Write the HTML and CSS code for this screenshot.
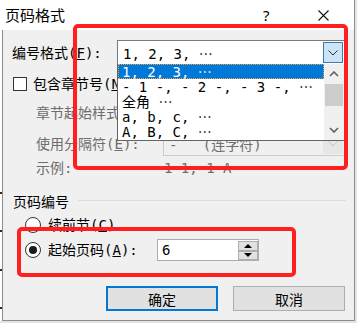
FILE: index.html
```html
<!DOCTYPE html>
<html lang="zh-CN">
<head>
    <meta charset="UTF-8">
    <meta name="viewport" content="width=device-width, initial-scale=1.0">
    <title>页码格式</title>
    <link rel="stylesheet" href="styles.css">
</head>
<body>
<div class="screen">
    <div class="dialog">
        <div class="titlebar">
            <span class="title">页码格式</span>
            <span class="help">?</span>
            <svg class="close" width="11" height="11" viewBox="0 0 11 11">
                <path d="M0.5 0.5 L10.5 10.5 M10.5 0.5 L0.5 10.5" stroke="#111" stroke-width="1.1" fill="none"/>
            </svg>
        </div>

        <div class="panel">
            <div class="row row-format">
                <span class="label label-format">编号格式(<u>F</u>):</span>
                <div class="combo">
                    <span class="combo-value">1, 2, 3, <span class="dots">…</span></span>
                    <span class="combo-btn combo-btn-hot">
                        <svg width="10" height="6" viewBox="0 0 10 6"><path d="M0.5 0.5 L5 5 L9.5 0.5" stroke="#333" fill="none"/></svg>
                    </span>
                </div>
            </div>

            <div class="row row-check">
                <span class="checkbox"></span>
                <span class="label">包含章节号(<u>N</u>)</span>
            </div>

            <div class="row row-sub">
                <span class="label label-sub">章节起始样式(<u>P</u>):</span>
                <div class="combo combo-off">
                    <span class="combo-value"></span>
                    <span class="combo-btn"></span>
                </div>
            </div>

            <div class="row row-sub row-sep">
                <span class="label label-sub">使用分隔符(<u>E</u>):</span>
                <div class="combo combo-off">
                    <span class="combo-value">-&nbsp;&nbsp;&nbsp;(连字符)</span>
                    <span class="combo-btn">
                        <svg width="10" height="6" viewBox="0 0 10 6"><path d="M0.5 0.5 L5 5 L9.5 0.5" stroke="#c4c4c4" fill="none"/></svg>
                    </span>
                </div>
            </div>

            <div class="row row-sample">
                <span class="label label-sub">示例:</span>
                <span class="sample">1-1, 1-A</span>
            </div>

            <div class="group-head">
                <span class="label">页码编号</span>
                <span class="group-line"></span>
            </div>

            <div class="row row-radio">
                <span class="radio"></span>
                <span class="label">续前节(<u>C</u>)</span>
            </div>

            <div class="row row-radio row-start">
                <span class="radio radio-on"></span>
                <span class="label label-start">起始页码(<u>A</u>):</span>
                <div class="spin">
                    <span class="spin-value">6</span>
                    <span class="spin-btns">
                        <span class="spin-btn"><span class="tri tri-up"></span></span>
                        <span class="spin-btn"><span class="tri tri-down"></span></span>
                    </span>
                </div>
            </div>

            <div class="buttons">
                <button class="btn btn-default">确定</button>
                <button class="btn">取消</button>
            </div>
        </div>
    </div>

    <!-- open list of the number format combo -->
    <div class="dropdown">
        <ul class="options">
            <li class="option selected">1, 2, 3, <span class="dots">…</span></li>
            <li class="option">- 1 -, - 2 -, - 3 -, <span class="dots">…</span></li>
            <li class="option">全角 <span class="dots">…</span></li>
            <li class="option">a, b, c, <span class="dots">…</span></li>
            <li class="option">A, B, C, <span class="dots">…</span></li>
        </ul>
        <div class="scrollbar">
            <span class="scroll-arrow">
                <svg width="10" height="6" viewBox="0 0 10 6"><path d="M1 5 L5 1 L9 5" stroke="#606060" stroke-width="1.6" fill="none"/></svg>
            </span>
            <span class="scroll-thumb"></span>
            <span class="scroll-space"></span>
            <span class="scroll-arrow">
                <svg width="10" height="6" viewBox="0 0 10 6"><path d="M1 1 L5 5 L9 1" stroke="#606060" stroke-width="1.6" fill="none"/></svg>
            </span>
        </div>
    </div>

    <!-- red annotation frames -->
    <div class="mark mark-format"></div>
    <div class="mark mark-start"></div>

    <span class="tick tick-1"></span>
    <span class="tick tick-2"></span>
    <span class="tick tick-3"></span>
    <span class="tick tick-4"></span>
</div>
</body>
</html>
```

FILE: styles.css
```css
/* Basic reset */
* {
    margin: 0;
    padding: 0;
    box-sizing: border-box;
}

body {
    width: 357px;
    height: 323px;
    background: #e4e4e4;
    font-family: "DejaVu Sans Mono", "Noto Sans CJK SC", monospace;
    font-size: 14px;
    color: #000;
    overflow: hidden;
}

u {
    text-decoration: underline;
    text-underline-offset: 1px;
}

.screen {
    position: relative;
    width: 357px;
    height: 323px;
}

.dialog {
    width: 355px;
    height: 321px;
    display: flex;
    flex-direction: column;
    background: #fff;
    border-right: 1px solid #8c8c8c;
}

/* title bar */
.titlebar {
    height: 30px;
    display: flex;
    align-items: center;
    background: #fff;
    padding-left: 5px;
}

.title {
    font-family: "Noto Sans CJK SC", sans-serif;
    font-size: 15px;
    line-height: 30px;
    width: 258px;
}

.help {
    font-family: "Noto Sans", sans-serif;
    font-size: 15px;
    width: 55px;
}

.close {
    display: block;
}

/* dialog body */
.panel {
    flex: 1;
    margin-left: 2px;
    background: #f0f0f0;
    border-left: 1px solid #8c8c8c;
    border-bottom: 1px solid #8c8c8c;
    padding: 10px 8px 0 8px;
    display: flex;
    flex-direction: column;
}

.row {
    display: flex;
    align-items: center;
}

.label {
    white-space: nowrap;
    line-height: 20px;
}

.row-format {
    height: 25px;
}

.label-format {
    width: 106px;
    padding-left: 1px;
}

.combo {
    width: 228px;
    height: 25px;
    display: flex;
    align-items: center;
    justify-content: space-between;
    background: #fff;
    border: 1px solid #7a7a7a;
    padding: 1px;
}

.combo-value {
    padding-left: 4px;
    white-space: nowrap;
}

.dots {
    font-family: "Noto Sans CJK SC", sans-serif;
}

.combo-btn {
    width: 20px;
    height: 100%;
    display: flex;
    align-items: center;
    justify-content: center;
}

.combo-btn-hot {
    background: #cce4f7;
    border: 1px solid #3d7ab3;
}

.row-check {
    height: 24px;
    margin-top: 7px;
}

.checkbox {
    width: 14px;
    height: 14px;
    margin-left: 2px;
    margin-right: 6px;
    background: #fff;
    border: 1px solid #333;
}

.row-sub {
    height: 24px;
    margin-top: 5px;
}

.label-sub {
    width: 152px;
    padding-left: 25px;
    color: #6d6d6d;
}

.combo-off {
    width: 182px;
    height: 24px;
    background: #f0f0f0;
    border-color: #cccccc;
    color: #6d6d6d;
}

.combo-off .combo-btn {
    background: #e6e6e6;
}

.row-sep {
    height: 25px;
    margin-top: 6px;
}

.row-sep .combo {
    height: 25px;
}

.row-sample {
    height: 22px;
    margin-top: 1px;
}

.sample {
    color: #6d6d6d;
    padding-left: 1px;
}

/* group "页码编号" */
.group-head {
    display: flex;
    align-items: center;
    height: 20px;
    margin-top: 13px;
    padding-left: 2px;
}

.group-line {
    flex: 1;
    height: 1px;
    margin: -3px 0 0 9px;
    background: #dcdcdc;
}

.row-radio {
    height: 22px;
    margin-top: 2px;
}

.radio {
    width: 16px;
    height: 16px;
    margin-left: 14px;
    margin-right: 7px;
    border: 1px solid #333;
    border-radius: 50%;
    background: #fff;
    display: flex;
    align-items: center;
    justify-content: center;
}

.radio-on::after {
    content: "";
    width: 8px;
    height: 8px;
    border-radius: 50%;
    background: #1a1a1a;
}

.row-start {
    margin-top: 3px;
}

.label-start {
    width: 109px;
}

.spin {
    width: 102px;
    height: 22px;
    display: flex;
    justify-content: space-between;
    background: #fff;
    border: 1px solid #adadad;
}

.spin-value {
    padding-left: 4px;
    line-height: 20px;
}

.spin-btns {
    width: 20px;
    display: flex;
    flex-direction: column;
    padding-top: 1px;
}

.spin-btn {
    flex: 1;
    display: flex;
    align-items: center;
    justify-content: center;
    background: #e1e1e1;
    border: 1px solid #adadad;
}

.tri {
    width: 0;
    height: 0;
    border-left: 4px solid transparent;
    border-right: 4px solid transparent;
}

.tri-up {
    border-bottom: 4px solid #000;
}

.tri-down {
    border-top: 4px solid #000;
}

/* bottom buttons */
.buttons {
    display: flex;
    justify-content: flex-end;
    gap: 15px;
    margin-top: 25px;
    padding-right: 1px;
}

.btn {
    width: 112px;
    height: 25px;
    font-family: "Noto Sans CJK SC", sans-serif;
    font-size: 14px;
    color: #000;
    background: #e1e1e1;
    border: 1px solid #adadad;
}

.btn-default {
    border: 2px solid #0078d7;
}

/* open dropdown list */
.dropdown {
    position: absolute;
    left: 117px;
    top: 64px;
    width: 228px;
    height: 77px;
    display: flex;
    background: #fff;
    border: 1px solid #646464;
    border-top: none;
}

.options {
    list-style: none;
    flex: 1;
    min-width: 0;
}

.option {
    height: 15px;
    line-height: 15px;
    padding-left: 4px;
    white-space: nowrap;
}

.option .dots {
    line-height: 15px;
}

.option.selected {
    background: #0078d7;
    color: #fff;
    outline: 1px dotted #f7a541;
    outline-offset: -1px;
}

.scrollbar {
    width: 20px;
    flex-shrink: 0;
    display: flex;
    flex-direction: column;
    background: #f0f0f0;
}

.scroll-arrow {
    height: 20px;
    display: flex;
    align-items: center;
    justify-content: center;
}

.scroll-thumb {
    height: 22px;
    margin: 0 1px;
    background: #cdcdcd;
}

.scroll-space {
    flex: 1;
}

/* red annotation frames */
.mark {
    position: absolute;
    border: 4px solid #ff1f1f;
    border-radius: 5px;
}

.mark-format {
    left: 73px;
    top: 24px;
    width: 275px;
    height: 146px;
}

.mark-start {
    left: 17px;
    top: 227px;
    width: 279px;
    height: 50px;
}

.tick {
    position: absolute;
    left: 0;
    width: 2px;
    height: 2px;
    background: #2e2a22;
}

.tick-1 { top: 192px; }
.tick-2 { top: 230px; }
.tick-3 { top: 269px; }
.tick-4 { top: 307px; }
```
